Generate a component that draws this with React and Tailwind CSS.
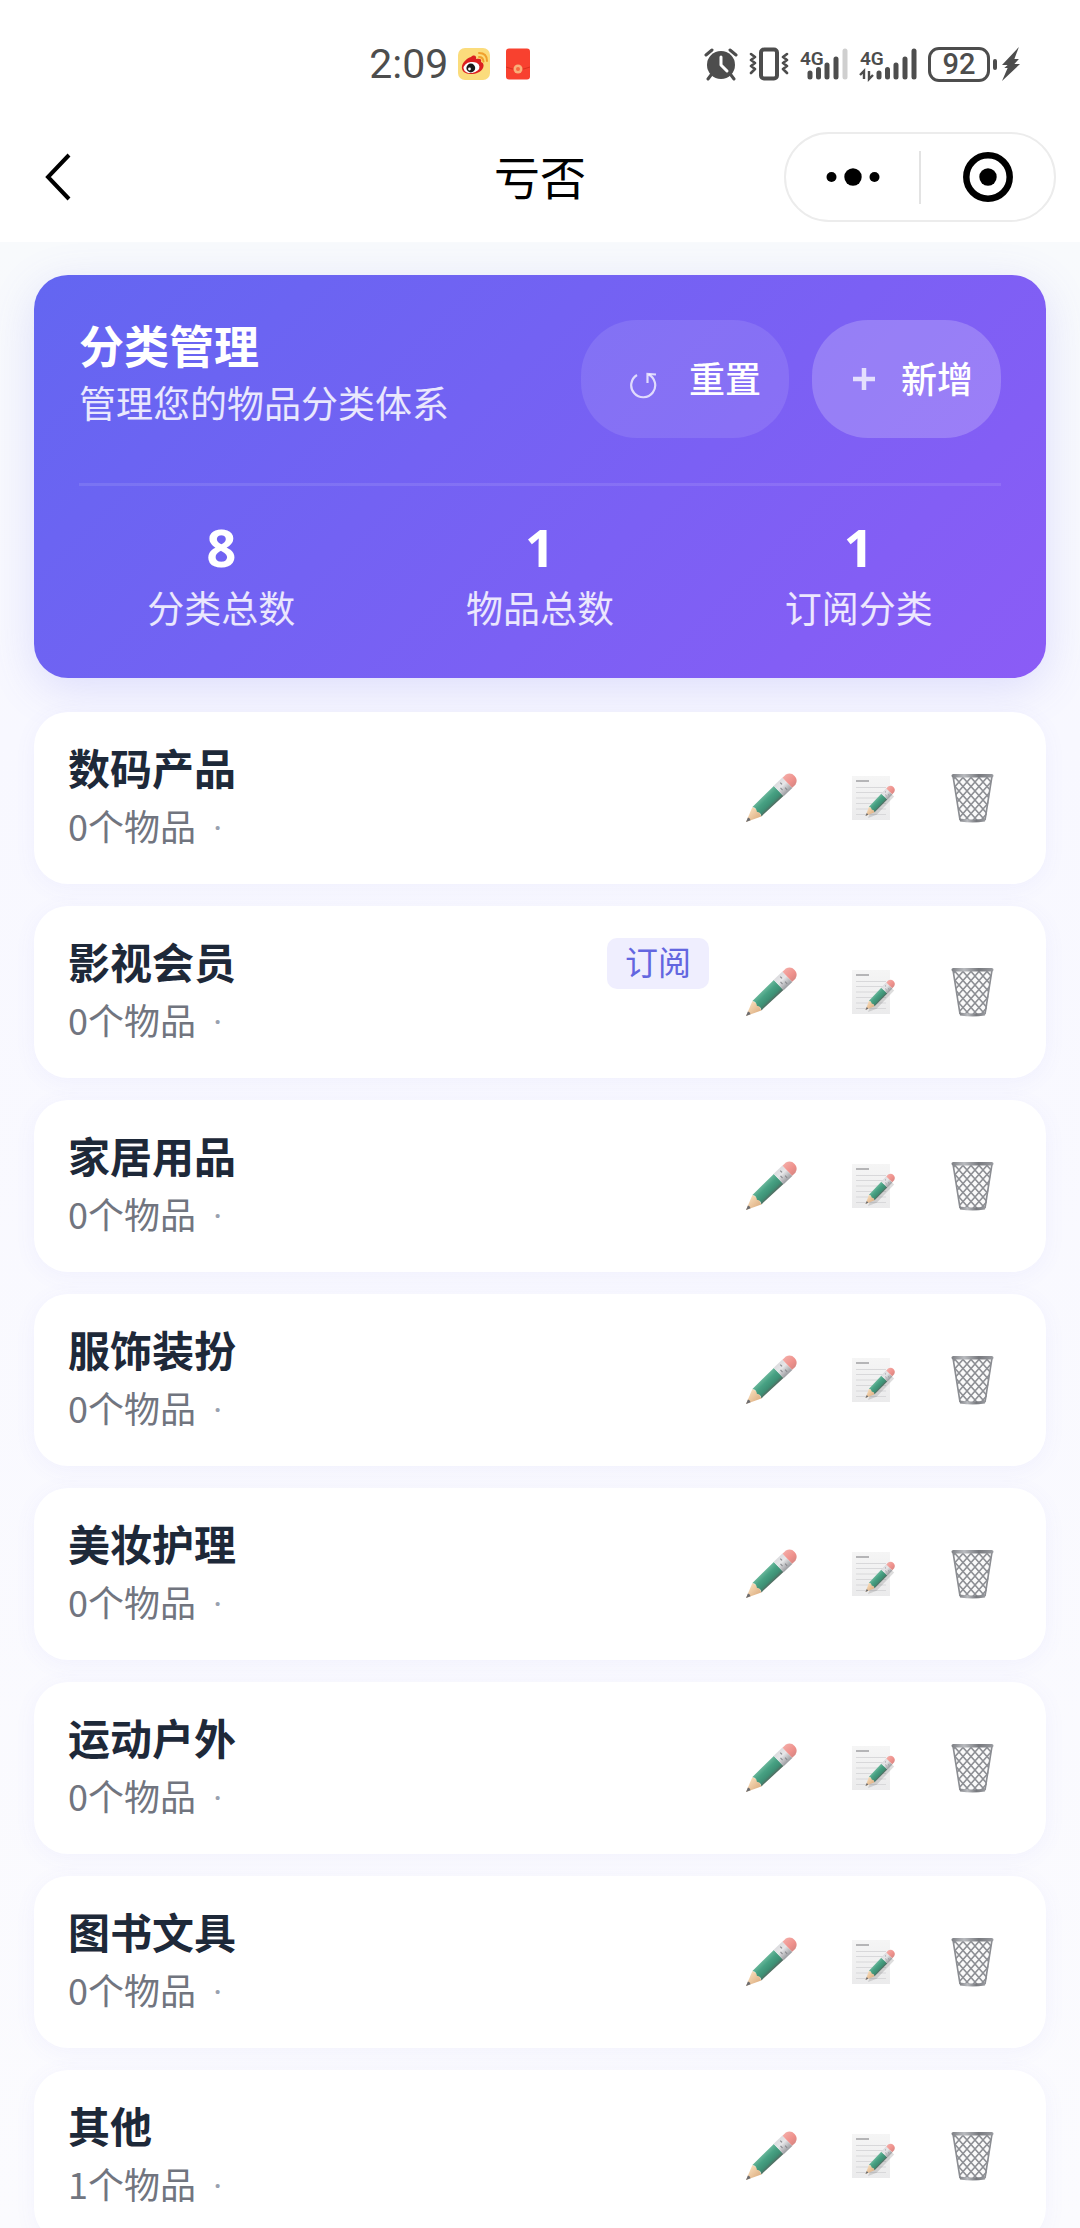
const categories = [
  { name: "数码产品", count: 0 },
  { name: "影视会员", count: 0, subscription: true },
  { name: "家居用品", count: 0 },
  { name: "服饰装扮", count: 0 },
  { name: "美妆护理", count: 0 },
  { name: "运动户外", count: 0 },
  { name: "图书文具", count: 0 },
  { name: "其他", count: 1 },
];

const stats = [
  { value: 8, label: "分类总数" },
  { value: 1, label: "物品总数" },
  { value: 1, label: "订阅分类" },
];

// Gradients and patterns shared by every row icon
function IconDefs() {
  return (
    <svg className="absolute h-0 w-0" aria-hidden="true">
      <defs>
        <linearGradient id="pencil-body" x1="0" y1="0" x2="0" y2="1">
          <stop offset="0" stopColor="#6ab79b" />
          <stop offset="0.35" stopColor="#47a183" />
          <stop offset="0.75" stopColor="#3d8f74" />
          <stop offset="1" stopColor="#55685f" />
        </linearGradient>
        <linearGradient id="pencil-ferrule" x1="0" y1="0" x2="0" y2="1">
          <stop offset="0" stopColor="#dcdcdf" />
          <stop offset="0.4" stopColor="#e6e6e8" />
          <stop offset="1" stopColor="#9a9b9f" />
        </linearGradient>
        <linearGradient id="pencil-eraser" x1="0" y1="0" x2="0" y2="1">
          <stop offset="0" stopColor="#f3aaa5" />
          <stop offset="0.6" stopColor="#ef918c" />
          <stop offset="1" stopColor="#d98783" />
        </linearGradient>
        <linearGradient id="pencil-wood" x1="0" y1="0" x2="0" y2="1">
          <stop offset="0" stopColor="#f7dcb9" />
          <stop offset="1" stopColor="#dfb184" />
        </linearGradient>
        <linearGradient id="paper" x1="0" y1="0" x2="0" y2="1">
          <stop offset="0" stopColor="#f5f5f5" />
          <stop offset="1" stopColor="#ebebec" />
        </linearGradient>
        <linearGradient id="bin-metal" x1="0" y1="0" x2="1" y2="0">
          <stop offset="0" stopColor="#7c7e83" />
          <stop offset="0.3" stopColor="#b9bbbf" />
          <stop offset="0.65" stopColor="#77797e" />
          <stop offset="1" stopColor="#9a9ca1" />
        </linearGradient>
        <pattern id="bin-mesh" width="8" height="9" patternUnits="userSpaceOnUse">
          <path d="M0 0 8 9M8 0 0 9" stroke="#8d8f94" strokeWidth="1.500" fill="none" />
        </pattern>
        <clipPath id="bin-shape">
          <path d="M2 3h39l-6 44H9z" />
        </clipPath>
      </defs>
    </svg>
  );
}

function PencilShape() {
  return (
    <>
      <path d="M0 0 15-6.5 17 0 15 6.5z" fill="url(#pencil-wood)" />
      <path d="M0 0 4.500-1.900 5.200 0 4.500 1.900z" fill="#6b6c70" />
      <path d="M15-6.500 45-7V7L15 6.500q2.500-3 0-6.500 2.500-3 0-6.500z" fill="url(#pencil-body)" />
      <path d="M45-7.200h12V7.200H45z" fill="url(#pencil-ferrule)" />
      <path d="M48.500-1v3M52-5v2.500M52 2v3" stroke="#8b8c90" strokeWidth="1.200" />
      <path d="M57-7h4.500Q67-5.500 67 0T61.500 7H57z" fill="url(#pencil-eraser)" />
    </>
  );
}

function PencilIcon() {
  return (
    <svg viewBox="0 0 50 50" className="size-[50px] overflow-visible" aria-hidden="true">
      <g transform="translate(0 49) rotate(-43.5)">
        <PencilShape />
      </g>
    </svg>
  );
}

function MemoIcon() {
  return (
    <svg viewBox="0 0 40 44" className="h-[44px] w-10 overflow-visible" aria-hidden="true">
      <rect width="38" height="44" fill="url(#paper)" />
      <path d="M4 5h13" stroke="#b5b5b7" strokeWidth="2" />
      <path d="M4 11.500h30M4 16.500h30M4 22h30M4 27.500h30M4 33h30M4 38.500h30" stroke="#d8d8da" strokeWidth="1.200" />
      <g transform="translate(16 42) rotate(-46) scale(.56)" opacity="0.2">
        <path d="M0 0 15-6H60V7H15z" fill="#555" />
      </g>
      <g transform="translate(13.500 40) rotate(-46) scale(.6)">
        <PencilShape />
      </g>
    </svg>
  );
}

function BinIcon() {
  return (
    <svg viewBox="0 0 43 50" className="h-[50px] w-[43px]" aria-hidden="true">
      <g clipPath="url(#bin-shape)">
        <rect width="43" height="50" fill="#fafafa" />
        <rect width="43" height="50" fill="url(#bin-mesh)" />
      </g>
      <path d="M2 3 9 47M41 3l-7 44" stroke="#8b8d92" strokeWidth="1.600" />
      <path d="M8.500 45.500q13 2 26 0l-.5 3q-12.500 1.800-25 0z" fill="url(#bin-metal)" />
      <rect x="0.500" y="1" width="42" height="3.600" rx="1.800" fill="url(#bin-metal)" />
    </svg>
  );
}

function WeiboIcon() {
  return (
    <svg viewBox="0 0 32 32" className="size-8" aria-hidden="true">
      <rect width="32" height="32" rx="7" fill="#fbdc7c" />
      <path d="M13 9c3-3 6-1 5 2 4-1 6 0 5 3 3 1 3 4 2 6-2 4-7 6-12 6-6 0-10-3-9-8 1-4 5-8 9-9z" fill="#dc1f20" />
      <ellipse cx="13.500" cy="19.500" rx="8" ry="5.500" transform="rotate(-8 13.500 19.500)" fill="#fff" />
      <circle cx="12.800" cy="20" r="4.400" fill="#1b1a1a" />
      <circle cx="11.500" cy="21" r="1.400" fill="#fff" />
      <path d="M21 5q8 0 8 8M21 9q4 0 4.500 4.500" stroke="#f0a02c" strokeWidth="2" fill="none" strokeLinecap="round" />
    </svg>
  );
}

function EnvelopeIcon() {
  return (
    <svg viewBox="0 0 24 32" className="h-8 w-6" aria-hidden="true">
      <rect width="24" height="31" y="0.500" rx="3" fill="#f8412f" />
      <path d="M0 19q12 5 24 0" stroke="#d8301f" strokeWidth="1" fill="none" />
      <circle cx="12" cy="21" r="4.500" fill="#f9b07a" />
      <circle cx="12" cy="21" r="2" fill="#f8683f" />
    </svg>
  );
}

function AlarmIcon() {
  return (
    <svg viewBox="0 0 34 34" className="size-[34px]" aria-hidden="true">
      <circle cx="17" cy="18" r="14" fill="#4d4d4d" />
      <path d="M2 8 8 3M32 8l-6-5M7 28l-3 4M27 28l3 4" stroke="#4d4d4d" strokeWidth="3" strokeLinecap="round" />
      <path d="M17 10v8l6 6" stroke="#fff" strokeWidth="3" fill="none" strokeLinecap="round" strokeLinejoin="round" />
    </svg>
  );
}

function VibrateIcon() {
  return (
    <svg viewBox="0 0 40 34" className="h-[34px] w-10" fill="none" stroke="#4d4d4d" aria-hidden="true">
      <rect x="12" y="2.500" width="16" height="29" rx="3" strokeWidth="4" />
      <path d="m2 7 4 3-4 3 4 3-4 3 4 3-4 4M38 7l-4 3 4 3-4 3 4 3-4 3 4 4" strokeWidth="2.600" strokeLinejoin="round" strokeLinecap="round" />
    </svg>
  );
}

function SignalIcon({ weak }) {
  return (
    <svg
      viewBox={weak ? "0 0 48 34" : "-10 0 58 34"}
      className={weak ? "h-[34px] w-12 overflow-visible" : "h-[34px] w-[58px] overflow-visible"}
      aria-hidden="true"
    >
      <text x={weak ? 0 : -9} y="18" fontSize="19" fontWeight="600" fill="#4d4d4d" className="font-[Roboto,sans-serif]">
        4G
      </text>
      {!weak && <path d="M-5 32v-8l-4 4M0 24v8l4-4" stroke="#4d4d4d" strokeWidth="2.400" fill="none" />}
      <path d="M10 30v-4M18.500 30v-7.500M27 30V18M36 30V12" stroke="#4d4d4d" strokeWidth="5" strokeLinecap="round" />
      <path d="M45 30V4" stroke={weak ? "#cfcfcf" : "#4d4d4d"} strokeWidth="5" strokeLinecap="round" />
    </svg>
  );
}

function StatusBar() {
  return (
    <div className="flex h-[112px] items-center justify-between bg-white pt-4 pr-[60px] pl-[34%]">
      <div className="flex items-center pl-[2px]">
        <span className="font-[Roboto,sans-serif] text-[41px] leading-[44px] text-[#4d4d4d]">2:09</span>
        <span className="ml-[10px] flex items-center gap-4">
          <WeiboIcon />
          <EnvelopeIcon />
        </span>
      </div>
      <div className="flex items-center gap-[11px]">
        <AlarmIcon />
        <VibrateIcon />
        <SignalIcon weak />
        <SignalIcon />
        <div className="flex items-center gap-[3px]">
          <span className="flex h-[35px] w-[62px] items-center justify-center rounded-[11px] border-[3px] border-[#4d4d4d] font-[Roboto,sans-serif] text-[29px] leading-none font-medium text-[#4d4d4d]">
            92
          </span>
          <span className="h-[11px] w-[4px] rounded-full bg-[#4d4d4d]" />
          <svg viewBox="0 0 16 36" className="ml-[2px] h-9 w-[18px]" preserveAspectRatio="none" aria-hidden="true">
            <path d="M15 1 0 19h5l-3 3h3L0 35l16-17h-5l4-5h-4z" fill="#4d4d4d" />
          </svg>
        </div>
      </div>
    </div>
  );
}

function NavBar() {
  return (
    <header className="grid h-[130px] grid-cols-[1fr_auto_1fr] items-center bg-white px-6">
      <button type="button" aria-label="返回" className="flex h-20 w-[68px] items-center justify-center">
        <svg viewBox="0 0 26 48" className="h-12 w-[26px]" aria-hidden="true">
          <path d="M24 2 3 24l21 22" stroke="#000" strokeWidth="4" fill="none" />
        </svg>
      </button>
      <h1 className="pb-1 text-[46px] leading-[56px] text-black">亏否</h1>
      <div className="flex h-[90px] w-[272px] items-center justify-self-end rounded-full border-2 border-[#ececec]">
        <button type="button" aria-label="更多" className="flex h-full flex-1 items-center justify-center">
          <svg viewBox="0 0 54 18" className="h-[18px] w-[54px]" aria-hidden="true">
            <circle cx="5.500" cy="9" r="5" />
            <circle cx="27" cy="9" r="8.700" />
            <circle cx="48.500" cy="9" r="5" />
          </svg>
        </button>
        <span className="h-[53px] w-[2px] bg-[#e3e3e3]" />
        <button type="button" aria-label="关闭" className="flex h-full flex-1 items-center justify-center">
          <svg viewBox="0 0 50 50" className="size-[50px]" aria-hidden="true">
            <circle cx="25" cy="25" r="21.700" fill="none" stroke="#000" strokeWidth="6.500" />
            <circle cx="25" cy="25" r="8.700" />
          </svg>
        </button>
      </div>
    </header>
  );
}

function SummaryCard() {
  return (
    <section className="rounded-[34px] bg-[linear-gradient(135deg,#6366f1_0%,#8b5cf6_100%)] p-[45px] text-white shadow-[0_11px_45px_rgba(99,102,241,0.18)]">
      <div className="flex items-start justify-between pb-[45px]">
        <div>
          <h2 className="text-[45px] leading-[50px] font-bold">分类管理</h2>
          <p className="mt-2 text-[37px] leading-[48px] text-white/85">管理您的物品分类体系</p>
        </div>
        <div className="flex gap-[23px] text-[36px] font-medium">
          <button type="button" className="flex h-[118px] items-center gap-3 rounded-[56px] bg-white/10 px-7">
            <span className="flex w-[68px] justify-center pt-3">
              <svg viewBox="0 0 28 28" className="size-7" fill="none" stroke="#fff" strokeOpacity="0.75" aria-hidden="true">
                <path d="M8 4A12 12 0 1 0 19.500 3.500" strokeWidth="2.200" />
                <path d="M18.500 12V3l8.500.5" strokeWidth="2.200" />
              </svg>
            </span>
            <span className="pb-1">重置</span>
          </button>
          <button type="button" className="flex h-[118px] items-center gap-3 rounded-[56px] bg-white/20 px-7">
            <span className="flex w-[49px] justify-center">
              <svg viewBox="0 0 24 24" className="size-6" aria-hidden="true">
                <path d="M12 1v22M1 12h22" stroke="#fff" strokeOpacity="0.75" strokeWidth="4.500" />
              </svg>
            </span>
            <span className="pb-1">新增</span>
          </button>
        </div>
      </div>
      <dl className="grid grid-cols-3 gap-[34px] border-t-[3px] border-white/10 pt-[34px] text-center">
        {stats.map((stat) => (
          <div key={stat.label} className="flex flex-col-reverse gap-[10px] pb-[2px]">
            <dt className="text-[37px] leading-[48px] text-white/85">{stat.label}</dt>
            <dd className="font-['Noto_Sans',sans-serif] text-[52px] leading-[53px] font-bold">{stat.value}</dd>
          </div>
        ))}
      </dl>
    </section>
  );
}

function CategoryRow({ category }) {
  const { name, count, subscription } = category;

  return (
    <li className="flex items-center gap-[22px] rounded-[34px] bg-white p-[34px] shadow-[0_4px_22px_rgba(99,102,241,0.06)]">
      <div className="min-w-0 flex-1">
        <div className="flex h-[46px] items-center justify-between">
          <h3 className="pb-1 text-[42px] leading-[46px] font-bold text-gray-800">{name}</h3>
          {subscription && (
            <span className="rounded-[10px] bg-[#efeefe] px-[18px] pb-1 text-[33px] leading-[47px] text-[#6366e0]">订阅</span>
          )}
        </div>
        <p className="mt-[10px] flex h-12 gap-[17px] text-[36px] leading-[46px] text-[#71757f]">
          <span>{count}个物品</span>
          <span className="pt-1 font-[Roboto,sans-serif] text-gray-400">·</span>
        </p>
      </div>
      <div className="flex gap-[22px]">
        <button type="button" aria-label={`编辑${name}`} className="flex size-[79px] items-center justify-center">
          <PencilIcon />
        </button>
        <button type="button" aria-label={`${name}备注`} className="flex size-[79px] items-center justify-center">
          <MemoIcon />
        </button>
        <button type="button" aria-label={`删除${name}`} className="flex size-[79px] items-center justify-center">
          <BinIcon />
        </button>
      </div>
    </li>
  );
}

export default function App() {
  return (
    <div className="flex h-screen flex-col overflow-hidden bg-white font-['Noto_Sans_CJK_SC',sans-serif]">
      <IconDefs />
      <StatusBar />
      <NavBar />
      <main className="flex-1 overflow-y-auto bg-[linear-gradient(180deg,#f8fafc_0%,#f8f8ff_25%,#fbfbfe_100%)] px-[34px] py-[33px] [scrollbar-width:none]">
        <SummaryCard />
        <ul className="mt-[34px] flex flex-col gap-[22px]">
          {categories.map((category) => (
            <CategoryRow key={category.name} category={category} />
          ))}
        </ul>
      </main>
    </div>
  );
}
